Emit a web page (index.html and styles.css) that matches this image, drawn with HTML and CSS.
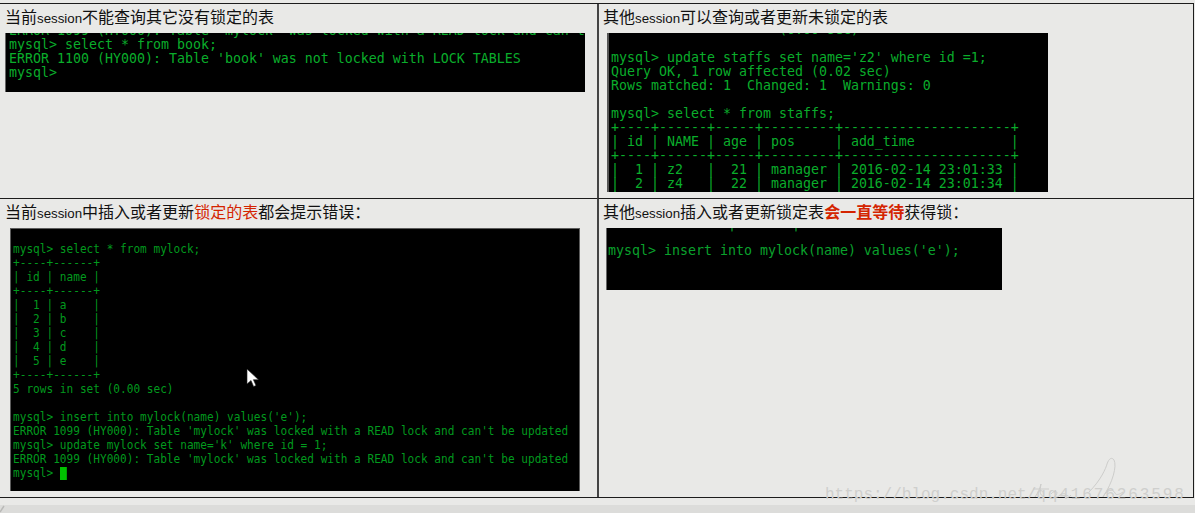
FILE: index.html
```html
<!DOCTYPE html>
<html lang="zh">
<head>
<meta charset="utf-8">
<title>MySQL read lock</title>
<link rel="stylesheet" href="styles.css">
</head>
<body>
<main class="sheet">
  <section class="cell cell-a">
    <p class="title">当前<span class="latin">session</span>不能查询其它没有锁定的表</p>
    <div class="term term-a"><pre class="clip-line">ERROR 1099 (HY000): Table 'mylock' was locked with a READ lock and can't</pre><pre>mysql&gt; select * from book;
ERROR 1100 (HY000): Table 'book' was not locked with LOCK TABLES
mysql&gt;</pre></div>
  </section>
  <section class="cell cell-b">
    <p class="title">其他<span class="latin">session</span>可以查询或者更新未锁定的表</p>
    <div class="term term-b"><pre class="clip-line">                     (0.00 sec)</pre><pre>

mysql&gt; update staffs set name='z2' where id =1;
Query OK, 1 row affected (0.02 sec)
Rows matched: 1  Changed: 1  Warnings: 0

mysql&gt; select * from staffs;
+----+------+-----+---------+---------------------+
| id | NAME | age | pos     | add_time            |
+----+------+-----+---------+---------------------+
|  1 | z2   |  21 | manager | 2016-02-14 23:01:33 |
|  2 | z4   |  22 | manager | 2016-02-14 23:01:34 |
|  3 | z5   |  23 | manager | 2016-02-14 23:01:34 |</pre></div>
  </section>
  <section class="cell cell-c">
    <p class="title">当前<span class="latin">session</span>中插入或者更新<span class="red">锁定的表</span>都会提示错误：</p>
    <div class="term term-c"><pre class="narrow">

mysql&gt; select * from mylock;
+----+------+
| id | name |
+----+------+
|  1 | a    |
|  2 | b    |
|  3 | c    |
|  4 | d    |
|  5 | e    |
+----+------+
5 rows in set (0.00 sec)

mysql&gt; insert into mylock(name) values('e');
ERROR 1099 (HY000): Table 'mylock' was locked with a READ lock and can't be updated
mysql&gt; update mylock set name='k' where id = 1;
ERROR 1099 (HY000): Table 'mylock' was locked with a READ lock and can't be updated
mysql&gt; <span class="caret"></span></pre>
      <svg class="pointer" width="14" height="20" viewBox="0 0 14 20" aria-hidden="true"><path d="M1 1v15l4-3.500 2.600 6 2.400-1-2.600-5.800H12.500z" fill="#fff" stroke="#222" stroke-width=".6"/></svg>
    </div>
  </section>
  <section class="cell cell-d">
    <p class="title">其他<span class="latin">session</span>插入或者更新锁定表<strong class="red">会一直等待</strong>获得锁：</p>
    <div class="term term-d"><pre class="clip-line">               |       |</pre><pre>

mysql&gt; insert into mylock(name) values('e');</pre></div>
  </section>
</main>
<footer class="strip"><svg class="tick" width="6" height="8" viewBox="0 0 6 8" aria-hidden="true"><path d="M0 7l4-6" stroke="#b9b9b7" stroke-width="1.500" fill="none"/></svg></footer>
<div class="mark" aria-hidden="true">
  <span class="mark-url">https://blog.csdn.net/</span><span class="mark-id">qq41676263598</span>
  <svg class="mark-loop" width="160" height="52" viewBox="0 0 160 52"><path d="M2 41c3-4 5-9 6-13-1 6-2 12 3 12M0 33h16M18 38c3-4 8-3 5 1-2 3 1 3 4 0 3-2 7-2 5 1-1 3 4 2 6-1M56 36c12-12 17-24 18-28 2-6 5-7 7-4 3 6-1 22-11 37 3-7 10-9 12-4 1 3 5 1 8-1" fill="none" stroke="#cdcdcb" stroke-width="1"/></svg>
</div>
</body>
</html>
```

FILE: styles.css
```css
* { box-sizing: border-box; }
html, body { margin: 0; padding: 0; }
body {
  position: relative;
  width: 1195px;
  height: 513px;
  overflow: hidden;
  background: #e9e9e7;
  padding-top: 3px;
  font-family: "Noto Sans CJK SC", "Liberation Sans", sans-serif;
  color: #111;
}
.sheet {
  display: grid;
  grid-template-columns: 597px 597px;
  grid-template-rows: 195px 298px;
  width: 1194px;
  border-top: 1px solid #1c1c1c;
  border-right: 1px solid #1c1c1c;
  border-bottom: 1px solid #1c1c1c;
}
.cell { min-width: 0; min-height: 0; overflow: hidden; }
.cell-b, .cell-d { border-left: 2px solid #444; }
.cell-a, .cell-b { border-bottom: 1px solid #1c1c1c; }
.title {
  margin: 0 0 5px;
  height: 24px;
  padding-left: 5px;
  font-size: 16px;
  line-height: 24px;
  white-space: nowrap;
}
.cell-b .title, .cell-d .title { padding-left: 4px; }
.latin { font-family: "Liberation Sans", sans-serif; font-size: 13.3px; }
.red { color: #d42400; }
.term {
  position: relative;
  overflow: hidden;
  background: #000;
  color: #0aad2b;
  font-family: "DejaVu Sans Mono", monospace;
}
.term pre {
  margin: 0;
  font: inherit;
  font-size: 13.29px;
  line-height: 14px;
  white-space: pre;
}
.term .clip-line { height: 14px; margin-top: -11px; }
.term-a {
  width: 580px;
  height: 59px;
  margin-left: 5px;
  padding: 2px 0 0 3px;
  border-left: 1px solid #666;
}
.term-b {
  width: 441px;
  height: 159px;
  margin-left: 8px;
  padding: 1px 0 0 2px;
  border-left: 2px solid #555;
}
.term-c {
  width: 570px;
  height: 263px;
  margin-left: 10px;
  padding: 0 0 0 2px;
  border: 1px solid #5c5c5c;
  border-bottom: 0;
  color: #02991e;
}
.term-c pre {
  font-size: 13px;
  width: 662px;
  transform: scaleX(.8545);
  transform-origin: 0 0;
  margin-top: -1px;
}
.term-d {
  width: 396px;
  height: 62px;
  margin-left: 7px;
  padding: 0 0 0 1px;
  border-left: 1px solid #666;
  color: #0aa02c;
}
.term-d .clip-line + pre { margin-top: -1px; }
.caret {
  display: inline-block;
  width: 8px;
  height: 13px;
  vertical-align: -3px;
  background: #00c000;
}
.pointer { position: absolute; left: 235px; top: 139px; }
.strip {
  position: absolute;
  left: 0;
  right: 0;
  top: 505px;
  height: 8px;
  background: #dcdcda;
}
.tick { display: block; }
.mark {
  position: absolute;
  left: 825px;
  top: 486px;
  width: 370px;
  font-family: "Liberation Mono", monospace;
  font-size: 16px;
  line-height: 18px;
  color: #cfcfcd;
  white-space: nowrap;
  pointer-events: none;
}
.mark-id { letter-spacing: 1.900px; }
.mark-loop { position: absolute; left: 208px; top: -30px; }
```
